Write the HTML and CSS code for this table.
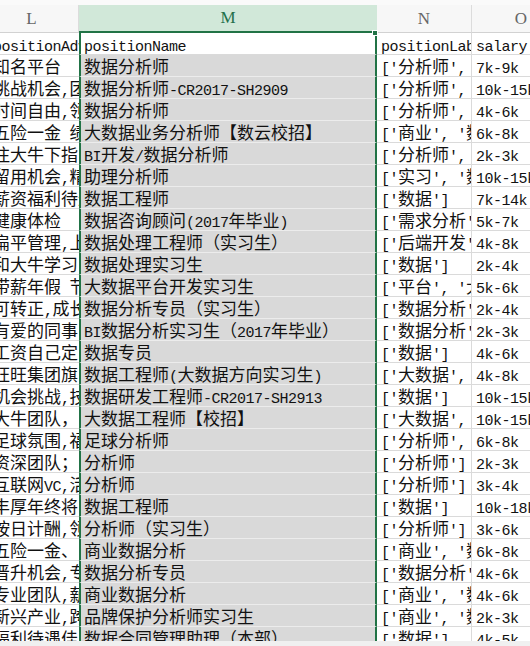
FILE: index.html
```html
<!DOCTYPE html>
<html lang="zh">
<head>
<meta charset="utf-8">
<title>Sheet</title>
<link rel="stylesheet" href="styles.css">
</head>
<body>
<div class="sheet">
  <div class="topstrip"></div>
  <div class="hdr">
    <div class="h hl">L</div>
    <div class="h hm">M<span class="handle"></span></div>
    <div class="h hn">N</div>
    <div class="h ho">O</div>
  </div>
  <div class="grid">
    <div class="r"><div class="c l"><span class="a">positionAdv</span></div><div class="c m act"><span class="a">positionName</span></div><div class="c n"><span class="a">positionLab</span></div><div class="c o"><span class="a">salary</span></div></div>
    <div class="r"><div class="c l">知名平台</div><div class="c m">数据分析师</div><div class="c n"><span class="a">['</span>分析师<span class="a">',</span></div><div class="c o"><span class="a">7k-9k</span></div></div>
    <div class="r"><div class="c l">挑战机会<span class="a">,</span>团</div><div class="c m">数据分析师<span class="a">-CR2017-SH2909</span></div><div class="c n"><span class="a">['</span>分析师<span class="a">',</span></div><div class="c o"><span class="a">10k-15k</span></div></div>
    <div class="r"><div class="c l">时间自由<span class="a">,</span>领</div><div class="c m">数据分析师</div><div class="c n"><span class="a">['</span>分析师<span class="a">',</span></div><div class="c o"><span class="a">4k-6k</span></div></div>
    <div class="r"><div class="c l">五险一金<span class="a"> </span>绩</div><div class="c m">大数据业务分析师【数云校招】</div><div class="c n"><span class="a">['</span>商业<span class="a">', '</span>数</div><div class="c o"><span class="a">6k-8k</span></div></div>
    <div class="r"><div class="c l">注大牛下指</div><div class="c m"><span class="a">BI</span>开发<span class="a">/</span>数据分析师</div><div class="c n"><span class="a">['</span>分析师<span class="a">',</span></div><div class="c o"><span class="a">2k-3k</span></div></div>
    <div class="r"><div class="c l">留用机会<span class="a">,</span>精</div><div class="c m">助理分析师</div><div class="c n"><span class="a">['</span>实习<span class="a">', '</span>数</div><div class="c o"><span class="a">10k-15k</span></div></div>
    <div class="r"><div class="c l">薪资福利待遇</div><div class="c m">数据工程师</div><div class="c n"><span class="a">['</span>数据<span class="a">']</span></div><div class="c o"><span class="a">7k-14k</span></div></div>
    <div class="r"><div class="c l">健康体检</div><div class="c m">数据咨询顾问<span class="a">(2017</span>年毕业<span class="a">)</span></div><div class="c n"><span class="a">['</span>需求分析<span class="a">'</span></div><div class="c o"><span class="a">5k-7k</span></div></div>
    <div class="r"><div class="c l">扁平管理<span class="a">,</span>上</div><div class="c m">数据处理工程师（实习生）</div><div class="c n"><span class="a">['</span>后端开发<span class="a">'</span></div><div class="c o"><span class="a">4k-8k</span></div></div>
    <div class="r"><div class="c l">和大牛学习</div><div class="c m">数据处理实习生</div><div class="c n"><span class="a">['</span>数据<span class="a">']</span></div><div class="c o"><span class="a">2k-4k</span></div></div>
    <div class="r"><div class="c l">带薪年假<span class="a"> </span>节</div><div class="c m">大数据平台开发实习生</div><div class="c n"><span class="a">['</span>平台<span class="a">', '</span>大</div><div class="c o"><span class="a">5k-6k</span></div></div>
    <div class="r"><div class="c l">可转正<span class="a">,</span>成长</div><div class="c m">数据分析专员（实习生）</div><div class="c n"><span class="a">['</span>数据分析<span class="a">'</span></div><div class="c o"><span class="a">2k-4k</span></div></div>
    <div class="r"><div class="c l">有爱的同事</div><div class="c m"><span class="a">BI</span>数据分析实习生（<span class="a">2017</span>年毕业）</div><div class="c n"><span class="a">['</span>数据分析<span class="a">'</span></div><div class="c o"><span class="a">2k-3k</span></div></div>
    <div class="r"><div class="c l">工资自己定</div><div class="c m">数据专员</div><div class="c n"><span class="a">['</span>数据<span class="a">']</span></div><div class="c o"><span class="a">4k-6k</span></div></div>
    <div class="r"><div class="c l">旺旺集团旗</div><div class="c m">数据工程师<span class="a">(</span>大数据方向实习生<span class="a">)</span></div><div class="c n"><span class="a">['</span>大数据<span class="a">',</span></div><div class="c o"><span class="a">4k-8k</span></div></div>
    <div class="r"><div class="c l">机会挑战<span class="a">,</span>技</div><div class="c m">数据研发工程师<span class="a">-CR2017-SH2913</span></div><div class="c n"><span class="a">['</span>数据<span class="a">']</span></div><div class="c o"><span class="a">10k-15k</span></div></div>
    <div class="r"><div class="c l">大牛团队，</div><div class="c m">大数据工程师【校招】</div><div class="c n"><span class="a">['</span>大数据<span class="a">',</span></div><div class="c o"><span class="a">10k-15k</span></div></div>
    <div class="r"><div class="c l">足球氛围<span class="a">,</span>福</div><div class="c m">足球分析师</div><div class="c n"><span class="a">['</span>分析师<span class="a">',</span></div><div class="c o"><span class="a">6k-8k</span></div></div>
    <div class="r"><div class="c l">资深团队；</div><div class="c m">分析师</div><div class="c n"><span class="a">['</span>分析师<span class="a">']</span></div><div class="c o"><span class="a">2k-3k</span></div></div>
    <div class="r"><div class="c l">互联网<span class="a">VC,</span>活</div><div class="c m">分析师</div><div class="c n"><span class="a">['</span>分析师<span class="a">']</span></div><div class="c o"><span class="a">3k-4k</span></div></div>
    <div class="r"><div class="c l">丰厚年终将</div><div class="c m">数据工程师</div><div class="c n"><span class="a">['</span>数据<span class="a">']</span></div><div class="c o"><span class="a">10k-18k</span></div></div>
    <div class="r"><div class="c l">按日计酬<span class="a">,</span>领</div><div class="c m">分析师（实习生）</div><div class="c n"><span class="a">['</span>分析师<span class="a">']</span></div><div class="c o"><span class="a">3k-6k</span></div></div>
    <div class="r"><div class="c l">五险一金、</div><div class="c m">商业数据分析</div><div class="c n"><span class="a">['</span>商业<span class="a">', '</span>数</div><div class="c o"><span class="a">6k-8k</span></div></div>
    <div class="r"><div class="c l">晋升机会<span class="a">,</span>专</div><div class="c m">数据分析专员</div><div class="c n"><span class="a">['</span>数据分析<span class="a">'</span></div><div class="c o"><span class="a">4k-6k</span></div></div>
    <div class="r"><div class="c l">专业团队<span class="a">,</span>薪</div><div class="c m">商业数据分析</div><div class="c n"><span class="a">['</span>商业<span class="a">', '</span>数</div><div class="c o"><span class="a">4k-6k</span></div></div>
    <div class="r"><div class="c l">新兴产业<span class="a">,</span>跨</div><div class="c m">品牌保护分析师实习生</div><div class="c n"><span class="a">['</span>商业<span class="a">', '</span>数</div><div class="c o"><span class="a">2k-3k</span></div></div>
    <div class="r"><div class="c l">福利待遇佳</div><div class="c m">数据合同管理助理（本部）</div><div class="c n"><span class="a">['</span>数据<span class="a">']</span></div><div class="c o"><span class="a">4k-5k</span></div></div>
  </div>
  <div class="bottomstrip"></div>
</div>
</body>
</html>
```

FILE: styles.css
```css
* { box-sizing: border-box; }
html, body { margin: 0; padding: 0; background: #ffffff; }
body { width: 530px; height: 646px; overflow: hidden; }

.sheet {
  width: 530px;
  height: 646px;
  display: flex;
  flex-direction: column;
  overflow: hidden;
  font-family: "Noto Sans CJK SC", "Liberation Sans", sans-serif;
  color: #111;
}

.topstrip { height: 5px; flex: none; background: #fafafa; }

.hdr {
  flex: none;
  height: 28px;
  display: grid;
  grid-template-columns: 79px 298px 95px 58px;
  background: #f7f7f7;
}
.h {
  font-family: "Liberation Serif", serif;
  font-size: 17px;
  line-height: 27px;
  color: #666;
  text-align: center;
  border-bottom: 1px solid #d2d2d2;
  border-right: 1px solid #dcdcdc;
}
.hl { padding-right: 15px; }
.hm {
  position: relative;
  background: #d1e8d9;
  color: #23704a;
  border-bottom: 2px solid #217346;
  border-right: none;
  line-height: 26px;
}
.ho { padding-left: 40px; border-right: none; }
.handle {
  position: absolute;
  right: -1px;
  bottom: -5px;
  width: 6px;
  height: 6px;
  background: #217346;
  border: 1px solid #ffffff;
}

.grid { flex: 1 1 auto; overflow: hidden; }
.r {
  display: grid;
  grid-template-columns: 79px 298px 95px 58px;
  height: 22px;
}
.c {
  height: 22px;
  font-size: 17px;
  line-height: 21px;
  white-space: nowrap;
  overflow: hidden;
  border-bottom: 1px solid #dadada;
  padding-left: 4px;
}
.a {
  font-family: "Liberation Mono", monospace;
  font-size: 15px;
  letter-spacing: -0.5px;
}

.l { padding-left: 0; text-indent: -7px; }
.m {
  background: #d9d9d9;
  border-left: 2px solid #217346;
  border-right: 2px solid #217346;
  border-bottom-color: #ececec;
  padding-left: 3px;
}
.m.act { background: #ffffff; border-bottom-color: #dadada; }
.n { border-right: 1px solid #dadada; }
.o { padding-left: 4px; }

.bottomstrip { flex: none; height: 5px; background: #f0f0f0; }
```
